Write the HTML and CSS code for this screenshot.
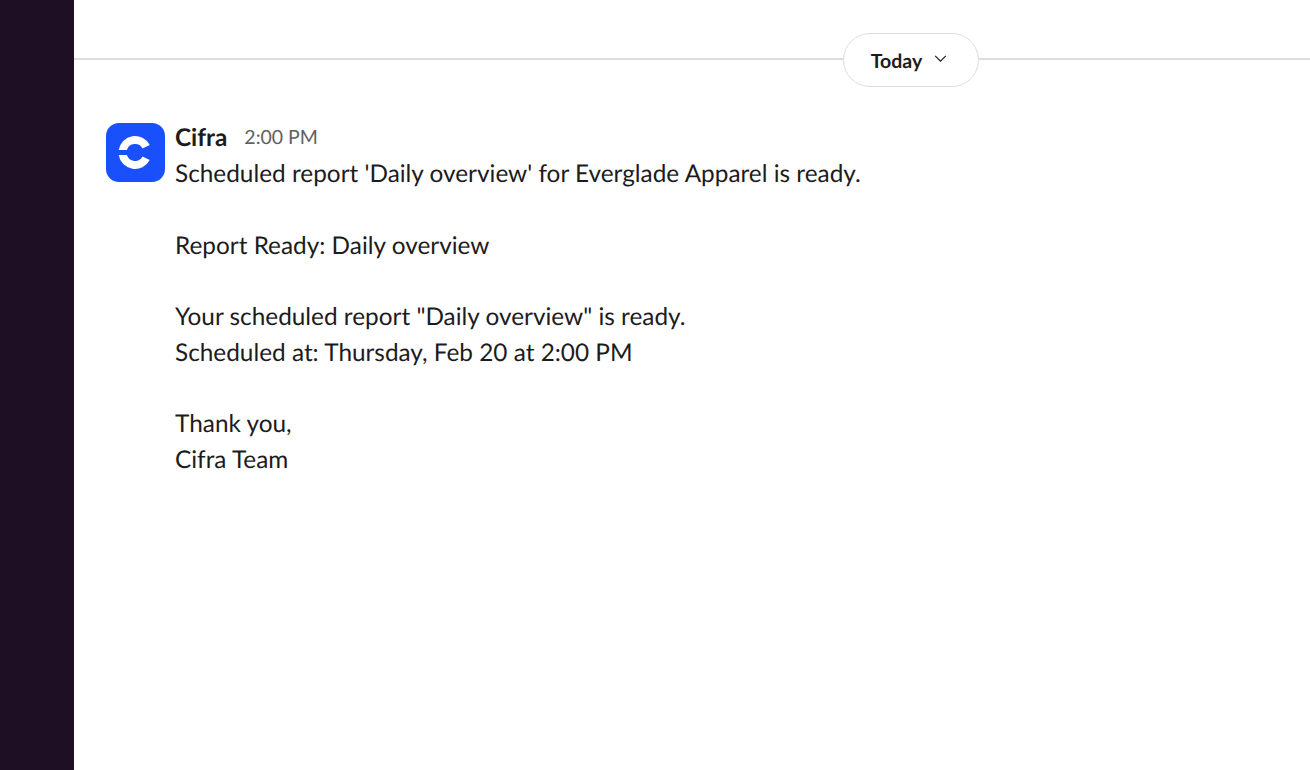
FILE: index.html
```html
<!DOCTYPE html>
<html lang="en">
<head>
<meta charset="utf-8">
<title>Cifra</title>
<link rel="stylesheet" href="styles.css">
</head>
<body>
<div class="app">
  <aside class="sidebar"></aside>
  <main class="channel">
    <div class="day-divider">
      <span class="rule rule-start"></span>
      <button class="day-pill">Today
        <svg class="chevron" viewBox="0 0 14 9" width="13" height="8"><path d="M1 1 7 7l6-6" fill="none" stroke="#1d1c1d" stroke-width="1.300"/></svg>
      </button>
      <span class="rule"></span>
    </div>
    <article class="message">
      <svg class="avatar" viewBox="0 0 59 59" width="59" height="59">
        <rect width="59" height="59" rx="13" fill="#1a50fb"/>
        <path d="M12.700 27A16.500 16.500 0 0 1 43.700 22L36.500 25.500A8.500 8.500 0 0 0 20.900 27Z" fill="#fff"/>
        <path d="M12.700 32 20.900 32A8.500 8.500 0 0 0 36.500 33.500L43.700 37A16.500 16.500 0 0 1 12.700 32Z" fill="#fff"/>
      </svg>
      <div class="content">
        <div class="meta"><span class="sender">Cifra</span><span class="time">2:00 PM</span></div>
        <div class="body">
          <p>Scheduled report 'Daily overview' for Everglade Apparel is ready.</p>
          <p>Report Ready: Daily overview</p>
          <p>Your scheduled report "Daily overview" is ready.<br>Scheduled at: Thursday, Feb 20 at 2:00 PM</p>
          <p>Thank you,<br>Cifra Team</p>
        </div>
      </div>
    </article>
  </main>
</div>
</body>
</html>
```
FILE: styles.css
```css
* { box-sizing: border-box; }
html, body { margin: 0; height: 100%; }
body { font-family: Lato, "Noto Sans", sans-serif; color: #1d1c1d; background: #fff; overflow: hidden; text-rendering: geometricPrecision; }
.app { display: flex; height: 770px; }
.sidebar { width: 74px; flex: none; background: #1f0f24; }
.channel { flex: 1; min-width: 0; }
.day-divider { display: flex; align-items: center; height: 54px; margin: 33px 0 36px; }
.rule { flex: 1; height: 1.625px; background: #dddddd; margin-top: -2px; }
.rule-start { flex: none; width: 769px; }
.day-pill { width: 136px; height: 54px; display: flex; align-items: center; justify-content: center; gap: 12px; padding: 2px 4px 0 0; border: 1.625px solid #dddddd; border-radius: 27px; background: #fff; font: 700 19.500px Lato, sans-serif; color: #1d1c1d; text-rendering: geometricPrecision; }
.chevron { margin-top: -5px; }
.message { display: flex; padding-left: 32px; gap: 10px; }
.avatar { flex: none; display: block; }
.content { margin-top: -4px; }
.meta { display: flex; align-items: center; gap: 17px; height: 37px; line-height: 35px; }
.sender { font-weight: 700; font-size: 24.375px; }
.time { font-size: 19.500px; color: #616061; }
.body { font-size: 24.375px; line-height: 35.750px; }
.body p { margin: 0 0 35.750px; }
```
